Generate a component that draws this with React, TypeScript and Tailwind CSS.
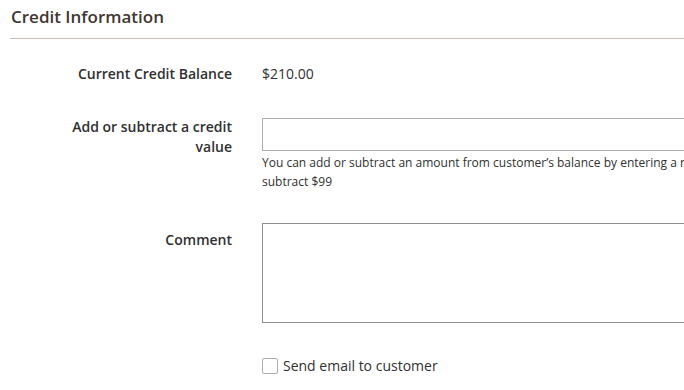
import React from "react";

const labelCls =
  "w-[232px] shrink-0 pr-0 text-right text-[14px] font-semibold leading-[20px] text-[#303030]";

export default function App() {
  return (
    <div
      className="h-[390px] w-[684px] overflow-hidden bg-white text-[#303030]"
      style={{ fontFamily: '"Open Sans", "Liberation Sans", sans-serif' }}
    >
      <div className="pl-[10px]">
        <div className="border-b border-[#cac3b4] pb-[9px] pl-px pt-[5px] text-[17px] font-semibold leading-[24px] text-[#41362f]">
          Credit Information
        </div>
      </div>

      <div className="mt-[25px] flex">
        <div className={labelCls}>Current Credit Balance</div>
        <div className="ml-[30px] text-[14px] leading-[20px]">$210.00</div>
      </div>

      <div className="mt-[33px] flex">
        <div className={labelCls}>
          Add or subtract a credit
          <br />
          value
        </div>
        <div className="ml-[30px] w-[760px] shrink-0 pt-px">
          <input
            type="text"
            className="block h-[33px] w-full border border-[#adadad] bg-white px-2 text-[14px] outline-none"
          />
          <div className="mt-[2px] text-[12px] leading-[19px]">
            You can add or subtract an amount from customer’s balance by entering a number. For
            example, enter "99" to add $99 and "-99" to
            <br />
            subtract $99
          </div>
        </div>
      </div>

      <div className="mt-[32px] flex">
        <div className={`${labelCls} pt-[7px]`}>Comment</div>
        <div className="ml-[30px] w-[760px] shrink-0">
          <textarea className="block h-[100px] w-full resize-none border border-[#8f8f8f] bg-white outline-none" />
        </div>
      </div>

      <div className="mt-[33px] flex">
        <div className="w-[232px] shrink-0" />
        <label className="ml-[30px] flex items-center gap-[5px] text-[14px] leading-[20px]">
          <span className="block h-[16px] w-[16px] rounded-[2px] border border-[#adadad] bg-white" />
          Send email to customer
        </label>
      </div>
    </div>
  );
}
